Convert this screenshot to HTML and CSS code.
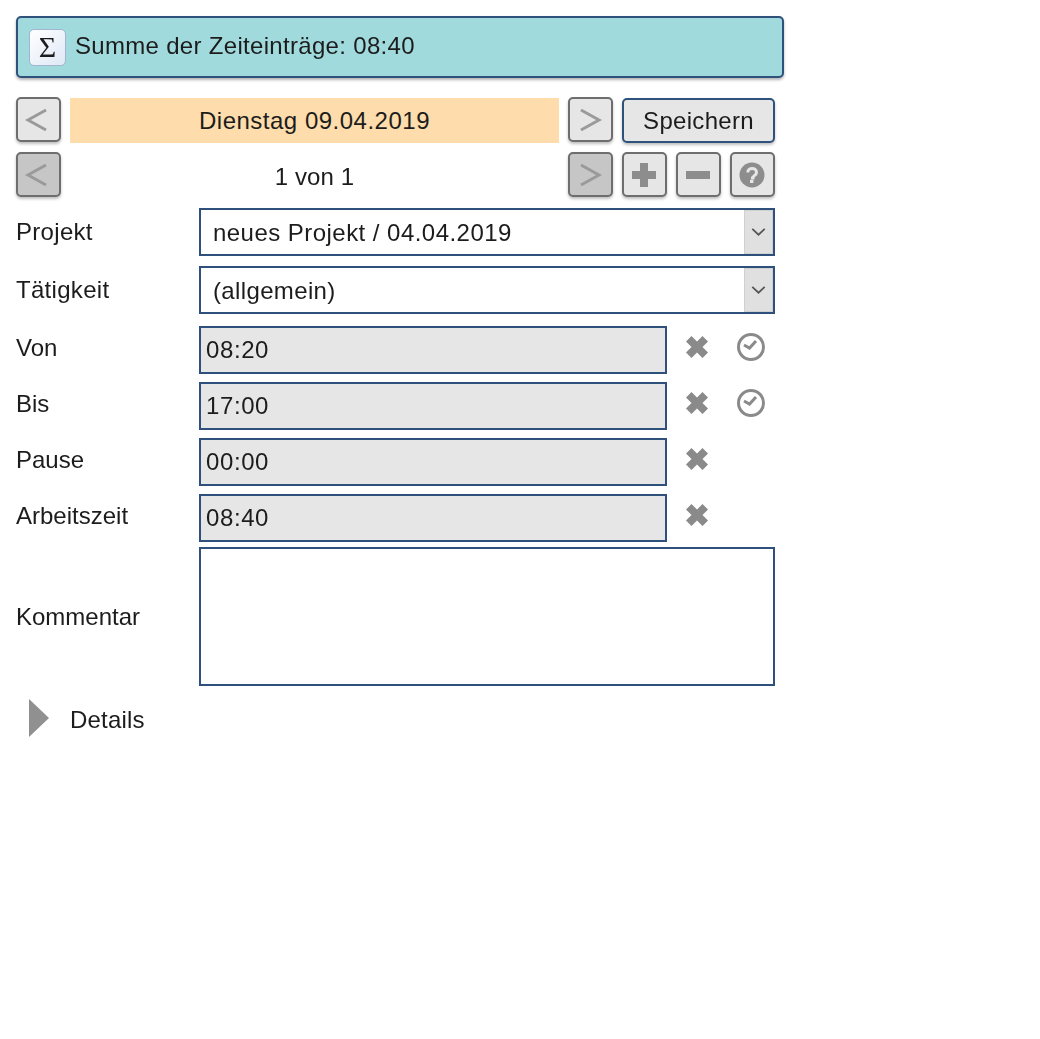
FILE: index.html
```html
<!DOCTYPE html>
<html lang="de">
<head>
<meta charset="utf-8">
<title>Zeiteinträge</title>
<link rel="stylesheet" href="styles.css">
</head>
<body>
<main class="app">
  <div class="banner">
    <span class="sigma">Σ</span>
    <span class="banner-text">Summe der Zeiteinträge: 08:40</span>
  </div>

  <div class="nav-rows">
    <div class="nav-row">
      <button class="btn square"><svg class="chev left" viewBox="0 0 22 24"><path d="M21 2 3 12l18 10" /></svg></button>
      <div class="date">Dienstag 09.04.2019</div>
      <button class="btn square"><svg class="chev" viewBox="0 0 22 24"><path d="M1 2l18 10L1 22" /></svg></button>
      <button class="btn save">Speichern</button>
    </div>
    <div class="nav-row">
      <button class="btn square dark"><svg class="chev left" viewBox="0 0 22 24"><path d="M21 2 3 12l18 10" /></svg></button>
      <div class="counter">1 von 1</div>
      <button class="btn square dark"><svg class="chev" viewBox="0 0 22 24"><path d="M1 2l18 10L1 22" /></svg></button>
      <div class="tools">
        <button class="btn square"><svg class="glyph" viewBox="0 0 26 26"><path d="M9 1h8v8h8v8h-8v8H9v-8H1V9h8z" /></svg></button>
        <button class="btn square"><svg class="glyph" viewBox="0 0 26 26"><rect x="1" y="9" width="24" height="8" /></svg></button>
        <button class="btn square"><svg class="glyph" viewBox="0 0 26 26"><circle cx="13" cy="13" r="12.500" /><path class="q" d="M8.800 10.500c0-5.300 8.700-5.300 8.700 0 0 2.900-3.500 2.900-3.500 5.500h-2" /><rect class="qd" x="11" y="17.800" width="3.400" height="3.200" /></svg></button>
      </div>
    </div>
  </div>

  <form class="form">
    <label class="lbl sel-row">Projekt</label>
    <div class="select"><span class="val wide">neues Projekt / 04.04.2019</span><span class="arrow"><svg viewBox="0 0 16 9"><path d="M1 1l7 6.500L15 1" /></svg></span></div>

    <label class="lbl sel-row">Tätigkeit</label>
    <div class="select second"><span class="val">(allgemein)</span><span class="arrow"><svg viewBox="0 0 16 9"><path d="M1 1l7 6.500L15 1" /></svg></span></div>

    <div class="time-list">
      <div class="time"><span class="lbl">Von</span><div class="field">08:20</div>
        <svg class="x" viewBox="0 0 24 24"><path d="M6.500 1 12 6.500 17.500 1 23 6.500 17.500 12 23 17.500 17.500 23 12 17.500 6.500 23 1 17.500 6.500 12 1 6.500z" /></svg>
        <svg class="clock" viewBox="0 0 30 30"><circle cx="15" cy="15" r="12.500" /><path d="M8 13l5.500 3L20 9" /></svg></div>
      <div class="time"><span class="lbl">Bis</span><div class="field">17:00</div>
        <svg class="x" viewBox="0 0 24 24"><path d="M6.500 1 12 6.500 17.500 1 23 6.500 17.500 12 23 17.500 17.500 23 12 17.500 6.500 23 1 17.500 6.500 12 1 6.500z" /></svg>
        <svg class="clock" viewBox="0 0 30 30"><circle cx="15" cy="15" r="12.500" /><path d="M8 13l5.500 3L20 9" /></svg></div>
      <div class="time"><span class="lbl">Pause</span><div class="field">00:00</div>
        <svg class="x" viewBox="0 0 24 24"><path d="M6.500 1 12 6.500 17.500 1 23 6.500 17.500 12 23 17.500 17.500 23 12 17.500 6.500 23 1 17.500 6.500 12 1 6.500z" /></svg></div>
      <div class="time"><span class="lbl">Arbeitszeit</span><div class="field">08:40</div>
        <svg class="x" viewBox="0 0 24 24"><path d="M6.500 1 12 6.500 17.500 1 23 6.500 17.500 12 23 17.500 17.500 23 12 17.500 6.500 23 1 17.500 6.500 12 1 6.500z" /></svg></div>
    </div>

    <label class="lbl comment-lbl">Kommentar</label>
    <div class="comment"></div>
  </form>

  <div class="details">
    <svg class="tri" viewBox="0 0 20 38"><path d="M0 0l20 19L0 38z" /></svg>
    <span class="details-text">Details</span>
  </div>
</main>
</body>
</html>
```

FILE: styles.css
```css
* { box-sizing: border-box; }
html, body { margin: 0; background: #fff; }
body {
  font-family: "Liberation Sans", Arial, sans-serif;
  font-size: 24px;
  color: #1c1c1c;
}
.app {
  width: 1040px;
  height: 1039px;
  padding: 16px;
  filter: blur(0.7px);
}
.banner {
  width: 768px;
  height: 62px;
  display: flex;
  align-items: center;
  gap: 9px;
  padding-left: 11px;
  background: #a0dadd;
  border: 2px solid #2f527c;
  border-radius: 5px;
  box-shadow: 0 2px 3px rgba(0,0,0,.3);
}
.banner-text { margin-bottom: 2px; letter-spacing: .31px; }
.sigma {
  width: 37px;
  height: 37px;
  display: flex;
  align-items: center;
  justify-content: center;
  font-family: "Liberation Serif", serif;
  font-size: 30px;
  background: linear-gradient(135deg, #fff, #dfe8f6);
  border: 1px solid #a3b4d0;
  border-radius: 5px;
}
.nav-rows {
  margin-top: 19px;
  width: 759px;
  display: flex;
  flex-direction: column;
  gap: 10px;
}
.nav-row {
  display: flex;
  align-items: stretch;
  height: 45px;
  gap: 9px;
}
.btn {
  padding: 0;
  margin: 0;
  font: inherit;
  color: inherit;
  background: #e6e6e6;
  border: 2px solid #6e6e6e;
  border-radius: 5px;
  box-shadow: 0 2px 3px rgba(0,0,0,.25);
  display: flex;
  align-items: center;
  justify-content: center;
}
.square { width: 45px; flex: none; }
.dark { background: #c6c6c6; }
.chev { width: 22px; height: 24px; fill: none; stroke: #9a9a9a; stroke-width: 3; }
.chev.left { margin-right: 6px; }
.glyph { width: 26px; height: 26px; fill: #8d8d8d; margin-right: 2px; }
.q { fill: none; stroke: #e6e6e6; stroke-width: 3; }
.qd { fill: #e6e6e6; }
.date {
  flex: 1;
  margin: 1px 0 -1px;
  letter-spacing: .5px;
  background: #fedcab;
  display: flex;
  align-items: center;
  justify-content: center;
}
.counter {
  flex: 1;
  padding-top: 4px;
  letter-spacing: .1px;
  display: flex;
  align-items: center;
  justify-content: center;
}
.save {
  width: 153px;
  flex: none;
  margin: 1px 0 -1px;
  letter-spacing: .3px;
  border-color: #2f527c;
}
.tools { display: flex; gap: 9px; width: 153px; }
.form {
  margin-top: 11px;
  width: 759px;
  display: grid;
  grid-template-columns: 183px 576px;
  align-items: center;
}
.lbl { display: block; }
.sel-row { margin-top: 0; letter-spacing: .3px; }
.select {
  height: 48px;
  display: flex;
  border: 2px solid #2f4f7c;
  background: #fff;
}
.second { margin-top: 10px; }
.sel-row:nth-of-type(2) { margin-top: 10px; }
.val {
  flex: 1;
  padding: 2px 0 0 12px;
  letter-spacing: .36px;
  display: flex;
  align-items: center;
}
.wide { letter-spacing: .46px; }
.arrow {
  width: 29px;
  background: #e0e0e0;
  border: 1px solid #d0d0d0;
  display: flex;
  align-items: center;
  justify-content: center;
}
.arrow svg { width: 15px; height: 8px; fill: none; stroke: #555; stroke-width: 2; }
.time-list {
  grid-column: 1 / -1;
  margin-top: 12px;
  display: flex;
  flex-direction: column;
  gap: 8px;
}
.time {
  display: grid;
  grid-template-columns: 183px 468px 30px 30px;
  height: 48px;
  align-items: center;
}
.time .lbl { margin-top: -4px; }
.field {
  height: 48px;
  padding-left: 5px;
  letter-spacing: .6px;
  display: flex;
  align-items: center;
  background: #e6e6e6;
  border: 2px solid #2f4f7c;
}
.x { width: 24px; height: 24px; fill: #8a8a8a; margin: 0 0 7px 18px; }
.clock { width: 30px; height: 30px; fill: none; stroke: #8a8a8a; stroke-width: 3; margin: 0 0 7px 39px; }
.comment-lbl { margin-top: 6px; }
.comment {
  margin-top: 5px;
  height: 139px;
  background: #fff;
  border: 2px solid #2f4f7c;
}
.details {
  margin-top: 13px;
  display: flex;
  align-items: center;
  gap: 21px;
  padding-left: 13px;
  height: 38px;
}
.details-text { margin-top: 3px; letter-spacing: .2px; }
.tri { width: 20px; height: 38px; fill: #909090; }
```
